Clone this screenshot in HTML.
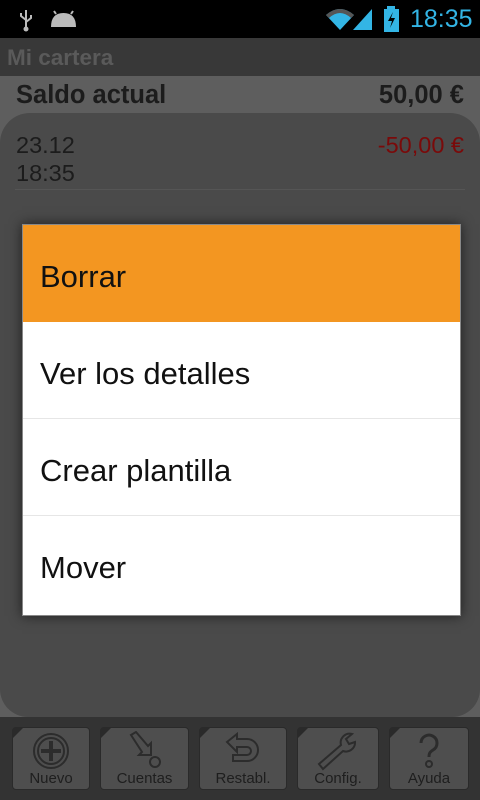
<!DOCTYPE html>
<html><head><meta charset="utf-8"><style>
*{margin:0;padding:0;box-sizing:border-box}
body{width:480px;height:800px;overflow:hidden;background:#5e5e5e;font-family:"Liberation Sans",sans-serif;position:relative}
.abs{position:absolute}
#sb{left:0;top:0;width:480px;height:38px;background:#000}
#tb{left:0;top:38px;width:480px;height:38px;background:#383838;color:#5a5a5a;font-weight:bold;font-size:22.5px;padding:7px 7px}
#saldo{left:16px;top:81px;font-weight:bold;font-size:25.5px;color:#1c1c1c}
#sval{right:16px;top:81px;font-weight:bold;font-size:25.5px;color:#1c1c1c}
#panel{left:0;top:113px;width:480px;height:604px;background:#4a4a4a;border-radius:30px 30px 28px 28px}
.t{font-size:23.5px;color:#1c1c1c}
#bb{left:0;top:717px;width:480px;height:83px;background:#333}
.btn{position:absolute;top:727px;height:63px;background:#4e4e4e;border:1px solid #2a2a2a;border-radius:4px;text-align:center;color:#1e1e1e;font-size:15px}
.btn span{position:absolute;left:0;right:0;bottom:2px}
.btn:before{content:"";position:absolute;left:0;top:0;border-top:10px solid #2a2a2a;border-right:10px solid transparent}
.btn svg{position:absolute;left:50%;top:3px;transform:translateX(-50%)}
#dlg{left:22px;top:224px;width:439px;height:392px;background:#fff;border:1px solid #888;box-shadow:0 0 12px rgba(0,0,0,.6)}
.row{height:97px;font-size:31px;color:#111;padding:34px 0 0 17px;border-bottom:1px solid #e6e6e6}
.row.sel{background:#f39621;border-bottom:none;height:97px}
</style></head><body>
<div id="sb" class="abs">
<svg class="abs" style="left:18px;top:8px" width="16" height="24"><path d="M8 2v20M8 12l-5-4v-3M8 14l5-4V7" stroke="#bbb" stroke-width="2" fill="none"/><circle cx="8" cy="21" r="2.5" fill="#bbb"/></svg>
<svg class="abs" style="left:50px;top:10px" width="27" height="18"><path d="M1 17 Q1 3 13.5 3 Q26 3 26 17Z" fill="#bbb"/><path d="M6 4 4 1M21 4 23 1" stroke="#bbb" stroke-width="2"/></svg>
<svg class="abs" style="left:325px;top:7px" width="50" height="24"><path d="M1 8 Q15 -4 29 8 L15 23Z" fill="#33b5e5"/><path d="M1 8 Q15 -4 29 8 L26 11 Q15 1 4 11Z" fill="#555"/><path d="M47 2V23H28Z" fill="#33b5e5"/></svg>
<svg class="abs" style="left:383px;top:6px" width="18" height="26"><rect x="4" y="0" width="8" height="3" fill="#33b5e5"/><rect x="1" y="3" width="15" height="23" fill="#33b5e5"/><path d="M10 6 5 15H9L7 22 12 12H8Z" fill="#000"/></svg>
<div class="abs" style="left:410px;top:5px;font-size:25px;color:#33b5e5">18:35</div>
</div>
<div id="tb" class="abs">Mi cartera</div>
<div id="saldo" class="abs">Saldo actual</div>
<div id="sval" class="abs">50,00 €</div>
<div id="panel" class="abs"></div>
<div class="abs t" style="left:16px;top:132px">23.12</div>
<div class="abs t" style="left:16px;top:160px">18:35</div>
<div class="abs t" style="right:16px;top:132px;color:#7a0a0a">-50,00 €</div>
<div class="abs" style="left:15px;top:189px;width:450px;height:1px;background:#555"></div>
<div id="bb" class="abs"></div>
<div class="btn" style="left:12px;width:78px"><svg width="40" height="40"><circle cx="20" cy="20" r="17" fill="none" stroke="#2c2c2c" stroke-width="2"/><circle cx="20" cy="20" r="13" fill="none" stroke="#2c2c2c" stroke-width="2"/><path d="M20 10v20M10 20h20" stroke="#2c2c2c" stroke-width="4"/></svg><span>Nuevo</span></div>
<div class="btn" style="left:100px;width:89px"><svg width="40" height="40"><path d="M6 4l5-3 12 14 3-3v12H14l3-3z" fill="none" stroke="#2c2c2c" stroke-width="2"/><circle cx="30" cy="31" r="5" fill="none" stroke="#2c2c2c" stroke-width="2"/></svg><span>Cuentas</span></div>
<div class="btn" style="left:199px;width:88px"><svg width="40" height="40"><path d="M4 11 14 3v5h10a10 10 0 0 1 0 22H10v-6h14a4 4 0 0 0 0-8H14v5z" fill="none" stroke="#2c2c2c" stroke-width="2"/></svg><span>Restabl.</span></div>
<div class="btn" style="left:297px;width:82px"><svg width="46" height="40"><path d="M4 33 26 14a9 9 0 0 1 11-11l-6 5 3 5 6-2a9 9 0 0 1-12 9L8 38z" fill="none" stroke="#2c2c2c" stroke-width="2"/></svg><span>Config.</span></div>
<div class="btn" style="left:389px;width:80px"><svg width="40" height="40"><path d="M12 12a8 8 0 1 1 12 7c-3 2-4 3-4 7" fill="none" stroke="#2c2c2c" stroke-width="3"/><circle cx="20" cy="33" r="3" fill="none" stroke="#2c2c2c" stroke-width="2"/></svg><span>Ayuda</span></div>
<div id="dlg" class="abs">
<div class="row sel">Borrar</div>
<div class="row">Ver los detalles</div>
<div class="row">Crear plantilla</div>
<div class="row" style="border:none">Mover</div>
</div>
</body></html>
